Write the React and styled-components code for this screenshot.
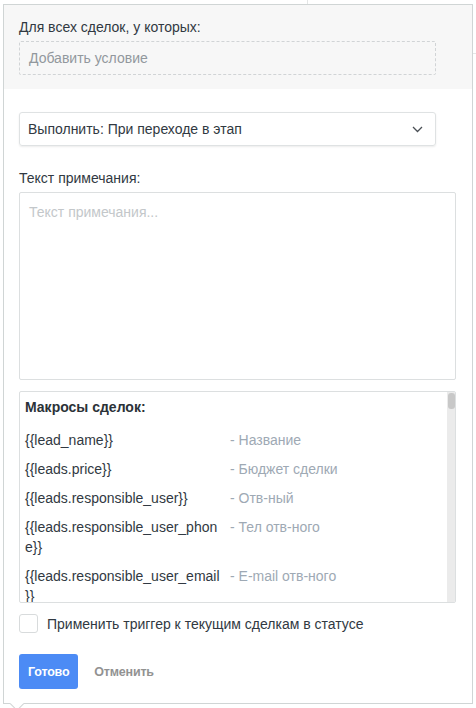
import React from 'react';
import styled, { createGlobalStyle } from 'styled-components';

const GlobalStyle = createGlobalStyle`
	html, body {
		margin: 0;
		padding: 0;
		background: #ffffff;
		font-family: "Liberation Sans", Arial, sans-serif;
		color: #313942;
		overflow: hidden;
	}
	* {
		box-sizing: border-box;
	}
`;

const Page = styled.div`
	padding: 4px 0 0 3px;
	height: 708px;
	background:
		linear-gradient(#e4e6e6, #e4e6e6) 307px 0 / 1px 4px no-repeat,
		linear-gradient(#e4e6e6, #e4e6e6) 473px 53px / 3px 1px no-repeat,
		#ffffff;
`;

const Panel = styled.div`
	position: relative;
	width: 470px;
	height: 700px;
	border: 1px solid #d0d5d5;
	background: #ffffff;
`;

const Arrow = styled.div`
	position: absolute;
	left: 8px;
	bottom: -6px;
	width: 10px;
	height: 10px;
	background: #ffffff;
	border-right: 1px solid #d0d5d5;
	border-bottom: 1px solid #d0d5d5;
	transform: rotate(45deg);
`;

const TopSection = styled.div`
	background: #f7f7f7;
	padding: 12px 0 14px 15px;
`;

const Label = styled.div`
	font-size: 14px;
	line-height: 20px;
	color: #313942;
	margin-bottom: 4px;
`;

const DashedBox = styled.div`
	width: 417px;
	height: 34px;
	border: 1px dashed #d1d4d6;
	border-radius: 2px;
	display: flex;
	align-items: center;
	padding-left: 9px;
	font-size: 14px;
	color: #92989d;
`;

const Body = styled.div`
	padding: 23px 0 0 15px;
	display: flex;
	flex-direction: column;
`;

const Select = styled.div`
	width: 417px;
	height: 34px;
	border: 1px solid #dfe2e3;
	border-radius: 3px;
	box-shadow: 0 1px 2px rgba(0, 0, 0, 0.08);
	display: flex;
	align-items: center;
	justify-content: space-between;
	padding: 0 12px 0 8px;
	font-size: 14px;
	color: #313942;
	margin-bottom: 22px;
`;

const TextArea = styled.div`
	width: 437px;
	height: 188px;
	border: 1px solid #dcdfe0;
	border-radius: 2px;
	padding: 9px 9px;
	font-size: 14px;
	line-height: 20px;
	color: #c3c7ca;
	margin-bottom: 11px;
`;

const Macros = styled.div`
	position: relative;
	width: 437px;
	height: 212px;
	border: 1px solid #dcdfe0;
	border-radius: 2px;
	overflow: hidden;
	padding: 5px 8px 0 5px;
`;

const ScrollTrack = styled.div`
	position: absolute;
	top: 0;
	right: 0;
	bottom: 0;
	width: 8px;
	background: #ebebeb;
`;

const ScrollThumb = styled.div`
	margin: 1px 0 0 1px;
	width: 7px;
	height: 16px;
	border-radius: 3px;
	background: #c8c8c8;
`;

const MacrosTitle = styled.div`
	font-size: 14px;
	line-height: 20px;
	font-weight: bold;
	color: #2b3238;
	margin-bottom: 13px;
`;

const MacroRow = styled.div`
	display: grid;
	grid-template-columns: 205px 1fr;
	font-size: 14px;
	line-height: 20px;
	margin-bottom: 9px;
`;

const MacroCode = styled.div`
	color: #313942;
	word-break: break-all;
	line-break: anywhere;
	padding-right: 8px;
`;

const MacroDesc = styled.div`
	color: #9ea9b4;
`;

const CheckRow = styled.label`
	display: flex;
	align-items: center;
	gap: 9px;
	margin-top: 11px;
	font-size: 14px;
	color: #313942;
`;

const CheckBox = styled.span`
	width: 19px;
	height: 19px;
	border: 1px solid #d8dbdc;
	border-radius: 3px;
	background: #ffffff;
`;

const Actions = styled.div`
	display: flex;
	align-items: center;
	gap: 16px;
	margin-top: 21px;
`;

const Button = styled.button`
	height: 35px;
	padding: 0 ${(p) => (p.$primary ? '9px' : '0')};
	border: 0;
	border-radius: 3px;
	background: ${(p) => (p.$primary ? '#4c8bf5' : 'transparent')};
	color: ${(p) => (p.$primary ? '#ffffff' : '#929292')};
	font-family: inherit;
	font-size: 12.5px;
	font-weight: bold;
	letter-spacing: -0.2px;
	cursor: pointer;
`;

const macros = [
	['{{lead_name}}', '- Название'],
	['{{leads.price}}', '- Бюджет сделки'],
	['{{leads.responsible_user}}', '- Отв-ный'],
	['{{leads.responsible_user_phone}}', '- Тел отв-ного'],
	['{{leads.responsible_user_email}}', '- E-mail отв-ного'],
];

export default function App() {
	return (
		<>
			<GlobalStyle />
			<Page>
				<Panel>
					<TopSection>
						<Label>Для всех сделок, у которых:</Label>
						<DashedBox>Добавить условие</DashedBox>
					</TopSection>
					<Body>
						<Select>
							<span>Выполнить: При переходе в этап</span>
							<svg width="11" height="7" viewBox="0 0 11 7">
								<path
									d="M1 1l4.5 4.5L10 1"
									fill="none"
									stroke="#4a4f55"
									strokeWidth="1.3"
								/>
							</svg>
						</Select>
						<Label>Текст примечания:</Label>
						<TextArea>Текст примечания...</TextArea>
						<Macros>
							<MacrosTitle>Макросы сделок:</MacrosTitle>
							{macros.map(([code, desc], i) => (
								<MacroRow key={i}>
									<MacroCode>{code}</MacroCode>
									<MacroDesc>{desc}</MacroDesc>
								</MacroRow>
							))}
							<ScrollTrack>
								<ScrollThumb />
							</ScrollTrack>
						</Macros>
						<CheckRow>
							<CheckBox />
							Применить триггер к текущим сделкам в статусе
						</CheckRow>
						<Actions>
							<Button $primary>Готово</Button>
							<Button>Отменить</Button>
						</Actions>
					</Body>
					<Arrow />
				</Panel>
			</Page>
		</>
	);
}
